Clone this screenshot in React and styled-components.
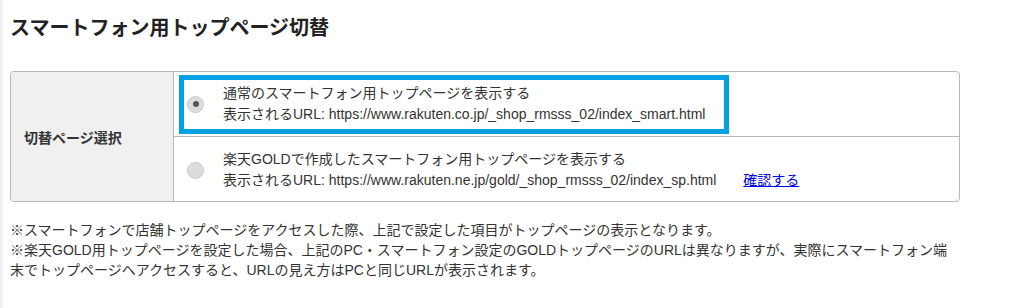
import React, { useState } from 'react';
import styled, { createGlobalStyle } from 'styled-components';

const GlobalStyle = createGlobalStyle`
  body {
    margin: 0;
    background: #fff;
    font-family: "Liberation Sans", Arial, "Noto Sans CJK JP", sans-serif;
    color: #333;
  }
`;

const Page = styled.div`
  border-left: 3px solid #f1f1f1;
  padding: 14px 0 20px 7px;
  min-height: 274px;
`;

const Title = styled.h2`
  margin: 0;
  font-size: 20px;
  line-height: 28px;
  font-weight: bold;
  color: #222;
`;

const Table = styled.div`
  margin-top: 29px;
  width: 950px;
  box-sizing: border-box;
  border: 1px solid #b8b8b8;
  border-radius: 4px;
  display: grid;
  grid-template-columns: 163px 1fr;
  overflow: hidden;
`;

const HeadCell = styled.div`
  background: #f0f0f0;
  border-right: 1px solid #b8b8b8;
  display: flex;
  align-items: center;
  padding-left: 13px;
  font-size: 14px;
  font-weight: bold;
  color: #333;
`;

const Options = styled.div`
  display: flex;
  flex-direction: column;
`;

const Row = styled.label`
  position: relative;
  display: flex;
  align-items: center;
  gap: 19px;
  padding: ${(p) => (p.first ? '11px 12px 11px 13px' : '12px 12px 10px 13px')};
  font-size: 14px;
  line-height: 21px;
  color: #333;
  cursor: pointer;
  & + & {
    border-top: 1px solid #b8b8b8;
  }
`;

const Radio = styled.span`
  flex: none;
  width: 17px;
  height: 17px;
  box-sizing: border-box;
  border-radius: 50%;
  background: #dcdcdc;
  border: 1px solid #c9c9c9;
  display: flex;
  align-items: center;
  justify-content: center;
  &::after {
    content: '';
    width: 6px;
    height: 6px;
    border-radius: 50%;
    background: ${(p) => (p.checked ? '#555' : 'transparent')};
  }
`;

const Lines = styled.div`
  display: flex;
  flex-direction: column;
`;

const Link = styled.a`
  margin-left: 27px;
  color: #0000ee;
  text-decoration: underline;
`;

const Highlight = styled.span`
  position: absolute;
  left: 5px;
  top: 3px;
  width: 550px;
  height: 59px;
  box-sizing: border-box;
  border: 5px solid #00a0e4;
  pointer-events: none;
`;

const Notes = styled.div`
  margin-top: 18px;
  font-size: 14px;
  line-height: 20px;
  color: #333;
`;

const options = [
  {
    id: 'normal',
    label: '通常のスマートフォン用トップページを表示する',
    url: 'https://www.rakuten.co.jp/_shop_rmsss_02/index_smart.html',
  },
  {
    id: 'gold',
    label: '楽天GOLDで作成したスマートフォン用トップページを表示する',
    url: 'https://www.rakuten.ne.jp/gold/_shop_rmsss_02/index_sp.html',
    link: '確認する',
  },
];

export default function App() {
  const [selected, setSelected] = useState('normal');

  return (
    <>
      <GlobalStyle />
      <Page>
        <Title>スマートフォン用トップページ切替</Title>
        <Table>
          <HeadCell>切替ページ選択</HeadCell>
          <Options>
            {options.map((o, i) => (
              <Row key={o.id} first={i === 0} onClick={() => setSelected(o.id)}>
                <Radio checked={selected === o.id} />
                <Lines>
                  <span>{o.label}</span>
                  <span>
                    表示されるURL: {o.url}
                    {o.link && <Link href="#">{o.link}</Link>}
                  </span>
                </Lines>
                {i === 0 && <Highlight />}
              </Row>
            ))}
          </Options>
        </Table>
        <Notes>
          ※スマートフォンで店舗トップページをアクセスした際、上記で設定した項目がトップページの表示となります。
          <br />
          ※楽天GOLD用トップページを設定した場合、上記のPC・スマートフォン設定のGOLDトップページのURLは異なりますが、実際にスマートフォン端
          <br />
          末でトップページへアクセスすると、URLの見え方はPCと同じURLが表示されます。
        </Notes>
      </Page>
    </>
  );
}
